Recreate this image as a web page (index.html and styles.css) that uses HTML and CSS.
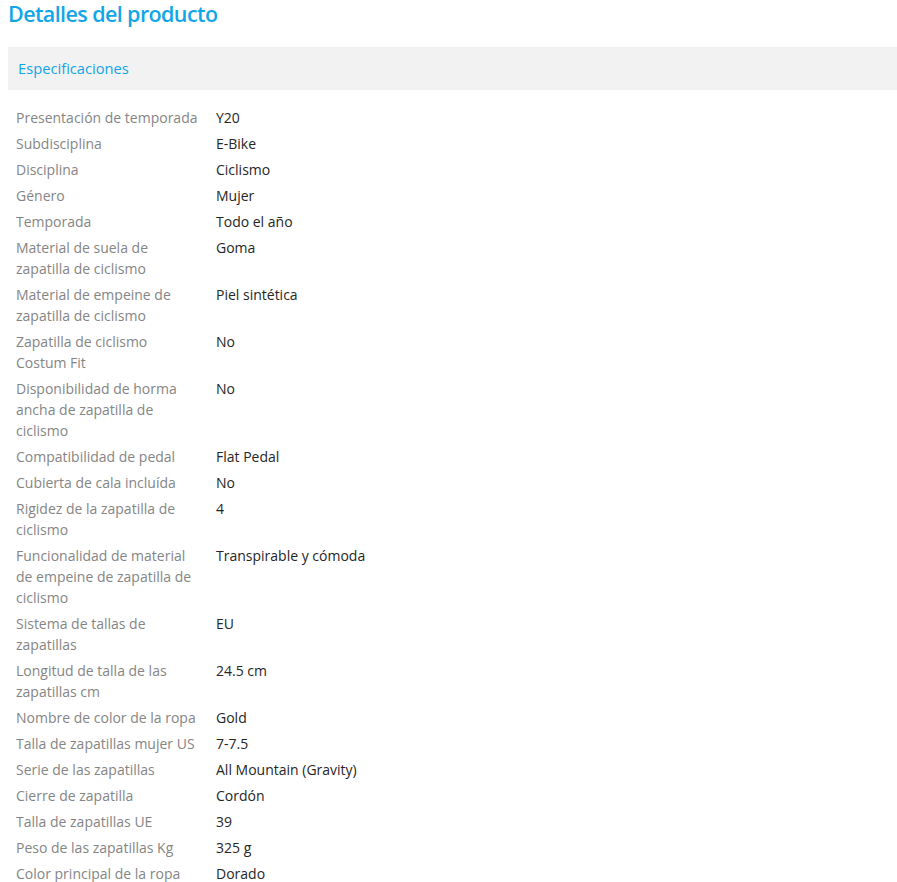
FILE: index.html
```
<!DOCTYPE html>
<html lang="es">
<head>
<meta charset="utf-8">
<link rel="stylesheet" href="styles.css">
</head>
<body>
<h2 class="title">Detalles del producto</h2>
<div class="panel-head">Especificaciones</div>
<table class="specs">
<tbody>
<tr><td class="k">Presentación de temporada</td><td class="v">Y20</td></tr>
<tr><td class="k">Subdisciplina</td><td class="v">E-Bike</td></tr>
<tr><td class="k">Disciplina</td><td class="v">Ciclismo</td></tr>
<tr><td class="k">Género</td><td class="v">Mujer</td></tr>
<tr><td class="k">Temporada</td><td class="v">Todo el año</td></tr>
<tr><td class="k">Material de suela de zapatilla de ciclismo</td><td class="v">Goma</td></tr>
<tr><td class="k">Material de empeine de zapatilla de ciclismo</td><td class="v">Piel sintética</td></tr>
<tr><td class="k">Zapatilla de ciclismo Costum Fit</td><td class="v">No</td></tr>
<tr><td class="k">Disponibilidad de horma ancha de zapatilla de ciclismo</td><td class="v">No</td></tr>
<tr><td class="k">Compatibilidad de pedal</td><td class="v">Flat Pedal</td></tr>
<tr><td class="k">Cubierta de cala incluída</td><td class="v">No</td></tr>
<tr><td class="k">Rigidez de la zapatilla de ciclismo</td><td class="v">4</td></tr>
<tr><td class="k">Funcionalidad de material de empeine de zapatilla de ciclismo</td><td class="v">Transpirable y cómoda</td></tr>
<tr><td class="k">Sistema de tallas de zapatillas</td><td class="v">EU</td></tr>
<tr><td class="k">Longitud de talla de las zapatillas cm</td><td class="v">24.5 cm</td></tr>
<tr><td class="k">Nombre de color de la ropa</td><td class="v">Gold</td></tr>
<tr><td class="k">Talla de zapatillas mujer US</td><td class="v">7-7.5</td></tr>
<tr><td class="k">Serie de las zapatillas</td><td class="v">All Mountain (Gravity)</td></tr>
<tr><td class="k">Cierre de zapatilla</td><td class="v">Cordón</td></tr>
<tr><td class="k">Talla de zapatillas UE</td><td class="v">39</td></tr>
<tr><td class="k">Peso de las zapatillas Kg</td><td class="v">325 g</td></tr>
<tr><td class="k">Color principal de la ropa</td><td class="v">Dorado</td></tr>
</tbody>
</table>
</body>
</html>
```
FILE: styles.css
```
html, body {
  margin: 0;
  padding: 0;
  background: #fff;
}
body {
  padding: 0 0 0 8px;
  font-family: "Open Sans", "Noto Sans", sans-serif;
  font-size: 14px;
  color: #333;
}
.title {
  margin: 0;
  height: 47px;
  font-size: 21.5px;
  line-height: 28px;
  font-weight: 600;
  letter-spacing: -0.6px;
  color: #12a6e8;
}
.panel-head {
  background: #f2f2f2;
  height: 43px;
  line-height: 43px;
  padding-left: 10px;
  font-size: 14.7px;
  color: #12a6e8;
}
.specs {
  border-collapse: collapse;
  margin-top: 15px;
}
.specs td {
  vertical-align: top;
  padding: 2px 8px 3px 8px;
  line-height: 21px;
}
.specs .k {
  width: 183px;
  padding-right: 9px;
  color: #858585;
}
.specs .v {
  color: #262626;
}
```
